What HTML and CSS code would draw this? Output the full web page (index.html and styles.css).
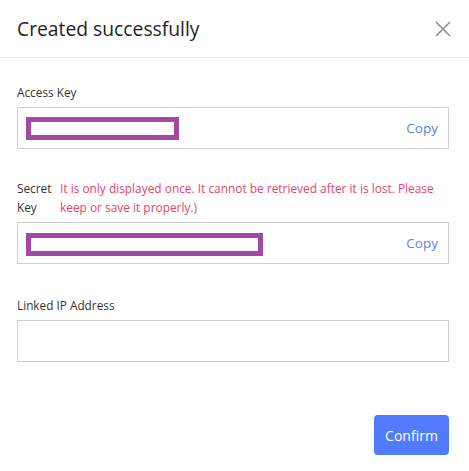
FILE: index.html
```html
<!DOCTYPE html>
<html>
<head>
<meta charset="utf-8">
<link rel="stylesheet" href="styles.css">
</head>
<body>
<div class="dialog">
  <div class="header">
    <div class="title">Created successfully</div>
    <svg class="close" width="16" height="16" viewBox="0 0 16 16"><path d="M1 1L15 15M15 1L1 15" stroke="#8a8f9c" stroke-width="1.6" fill="none"/></svg>
  </div>
  <div class="content">
    <div class="field first">
      <div class="label">Access Key</div>
      <div class="box">
        <div class="mask mask-a"></div>
        <span class="copy">Copy</span>
      </div>
    </div>
    <div class="field second">
      <div class="label-row">
        <div class="label narrow">Secret Key</div>
        <div class="warn">It is only displayed once. It cannot be retrieved after it is lost. Please keep or save it properly.)</div>
      </div>
      <div class="box">
        <div class="mask mask-b"></div>
        <span class="copy">Copy</span>
      </div>
    </div>
    <div class="field third">
      <div class="label">Linked IP Address</div>
      <div class="box"></div>
    </div>
    <div class="footer">
      <button class="confirm">Confirm</button>
    </div>
  </div>
</div>
</body>
</html>
```
FILE: styles.css
```css
html, body {
  margin: 0;
  padding: 0;
  background: #fff;
}
body {
  font-family: "Open Sans", "Noto Sans", sans-serif;
  color: #222;
  width: 469px;
  height: 471px;
  overflow: hidden;
}
.header {
  height: 57px;
  border-bottom: 1px solid #e8e8e8;
  display: flex;
  align-items: center;
  justify-content: space-between;
  padding: 0 18px 0 17px;
}
.title {
  font-size: 19.3px;
  color: #1f1f1f;
}
.close {
  display: block;
}
.content {
  padding: 0 20px 0 17px;
}
.field.first { padding-top: 26px; }
.field.second { padding-top: 30px; }
.field.third { padding-top: 33px; }
.label {
  font-size: 11.8px;
  line-height: 16px;
  color: #333;
  margin-bottom: 7px;
}
.label-row {
  display: flex;
  margin-bottom: 5px;
}
.label.narrow {
  width: 43px;
  flex: none;
  line-height: 19px;
  margin-bottom: 0;
}
.warn {
  font-size: 11.9px;
  line-height: 19px;
  color: #e8436a;
  padding-right: 0;
}
.box {
  height: 40px;
  border: 1px solid #d0d0d0;
  display: flex;
  align-items: center;
  justify-content: space-between;
  padding: 0 10px 0 8px;
}
.mask {
  box-sizing: border-box;
  height: 23px;
  border: 5px solid #a349a4;
  background: #fff;
}
.mask-a { width: 153px; margin-top: 1px; }
.mask-b { width: 237px; margin-top: 2px; }
.copy {
  font-size: 13.5px;
  color: #5b7ff5;
}
.footer {
  display: flex;
  justify-content: flex-end;
  padding-top: 53px;
}
.confirm {
  width: 75px;
  height: 40px;
  border: none;
  border-radius: 4px;
  background: #4f7bfc;
  color: #fff;
  font-family: "Open Sans", "Noto Sans", sans-serif;
  font-size: 14px;
  padding: 0;
}
```
